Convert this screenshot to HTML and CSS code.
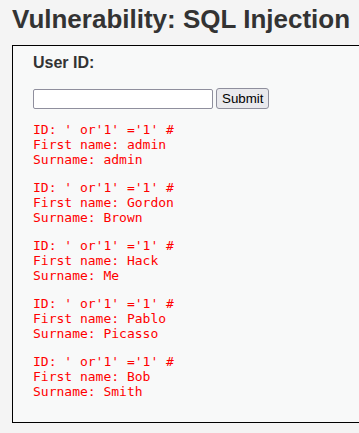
FILE: index.html
```html
<!DOCTYPE html>
<html lang="en">
<head>
    <meta charset="UTF-8">
    <title>Vulnerability: SQL Injection</title>
    <link rel="stylesheet" href="styles.css">
</head>
<body>
    <div class="body_padded">
        <h1>Vulnerability: SQL Injection</h1>

        <div class="vulnerable_code_area">
            <form action="#" method="GET">
                <p class="label">User ID:</p>
                <div class="row">
                    <input type="text" name="id" class="id-input">
                    <input type="submit" name="Submit" value="Submit" class="submit-btn">
                </div>
            </form>
<pre>ID: ' or'1' ='1' #
First name: admin
Surname: admin</pre>
<pre>ID: ' or'1' ='1' #
First name: Gordon
Surname: Brown</pre>
<pre>ID: ' or'1' ='1' #
First name: Hack
Surname: Me</pre>
<pre>ID: ' or'1' ='1' #
First name: Pablo
Surname: Picasso</pre>
<pre>ID: ' or'1' ='1' #
First name: Bob
Surname: Smith</pre>
        </div>
    </div>
</body>
</html>
```

FILE: styles.css
```css
html, body {
    overflow: hidden;
}
body {
    margin: 0;
    background: #f4f4f4;
    font-family: "Liberation Sans", Arial, sans-serif;
    color: #333;
}
.body_padded {
    padding: 0 12px;
}
h1 {
    font-size: 26px;
    line-height: 30px;
    font-weight: bold;
    margin: 0;
    padding-top: 4px;
    margin-bottom: 11px;
    white-space: nowrap;
}
.vulnerable_code_area {
    width: 560px;
    background: #f8f9f9;
    border: 1px solid #000;
    padding: 0 20px 10px;
}
form {
    margin: 0;
}
.label {
    font-size: 16px;
    line-height: 18px;
    font-weight: bold;
    margin: 8px 0 16px;
}
.row {
    display: flex;
    align-items: center;
    gap: 3px;
    height: 21px;
}
.id-input {
    box-sizing: border-box;
    width: 180px;
    height: 20px;
    margin: 0;
    padding: 1px 2px;
    border: 1px solid #8f8f9d;
    border-radius: 2px;
    background: #fff;
    font-family: "Liberation Sans", Arial, sans-serif;
    font-size: 13px;
}
.submit-btn {
    box-sizing: border-box;
    height: 21px;
    margin: 0;
    padding: 1px 5px;
    border: 1px solid #8f8f9d;
    border-radius: 3px;
    background: #e9e9ed;
    color: #000;
    font-family: "Liberation Sans", Arial, sans-serif;
    font-size: 13.33px;
}
pre {
    font-family: "DejaVu Sans Mono", monospace;
    font-size: 13px;
    line-height: 15px;
    color: #ff0000;
    margin: 13px 0;
}
```
